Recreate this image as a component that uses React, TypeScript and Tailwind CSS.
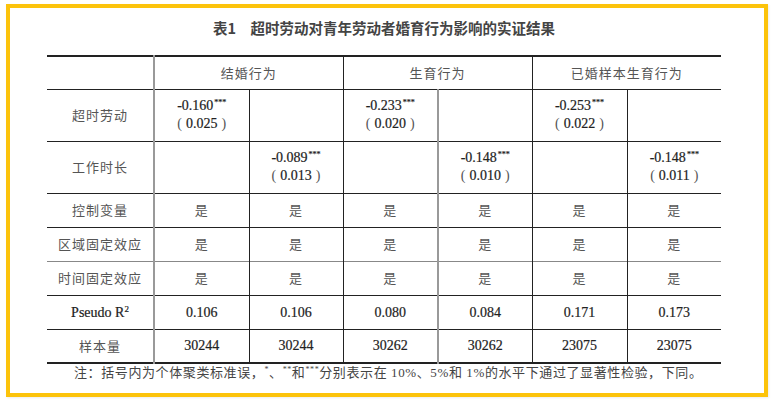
import React from "react";

const serif = { fontFamily: '"Liberation Serif", "Noto Sans CJK SC", serif' };
const cjkFont = { fontFamily: '"Noto Sans CJK SC", sans-serif' };

function Stars({ n }: { n: string }) {
  return <span className="text-[8px] relative -top-[5px] ml-[1px]">{n}</span>;
}

function Coef({ v, se }: { v: string; se: string }) {
  return (
    <div className="flex flex-col items-center leading-[16px] text-[14px] text-[#222] [-webkit-text-stroke:0.2px_#222]">
      <div>
        {v}
        <Stars n="***" />
      </div>
      <div className="flex items-center">
        <span className="text-[14px] text-[#555] mr-[4px] [-webkit-text-stroke:0px]">(</span>
        <span>{se}</span>
        <span className="text-[14px] text-[#555] ml-[4px] [-webkit-text-stroke:0px]">)</span>
      </div>
    </div>
  );
}

const cjk = "text-[13px] tracking-[1px] text-[#555]";
const num = "text-[14px] text-[#222] [-webkit-text-stroke:0.2px_#222]";

export default function App() {
  const lb = "border-l border-[#222]";
  const grayL = "border-l-2 border-[#999]";
  const yes = ["是", "是", "是", "是", "是", "是"];
  const rowYes = (label: string, grayTop?: boolean) => (
    <tr className={`h-[34px] border-t ${grayTop ? "border-[#888]" : "border-[#222]"}`}>
      <td className={cjk} style={cjkFont}>{label}</td>
      {yes.map((y, i) => (
        <td
          key={i}
          style={cjkFont}
          className={`${cjk} ${i === 0 || i === 3 ? grayL : lb}`}
        >
          {y}
        </td>
      ))}
    </tr>
  );
  const nums = (label: React.ReactNode, vals: string[]) => (
    <tr className="h-[34px] border-t border-[#222]">
      <td className={num}>{label}</td>
      {vals.map((v, i) => (
        <td key={i} className={`${num} ${i === 0 || i === 3 ? grayL : lb}`}>
          {v}
        </td>
      ))}
    </tr>
  );
  return (
    <div className="w-[776px] h-[402px] bg-white pt-[4px] pl-[6px]" style={serif}>
      <div className="w-[762px] h-[393px] border-4 border-[#fcc30b] bg-white flex flex-col shadow-[1px_1px_2px_rgba(0,0,0,0.08)]">
        <div
          className="mt-[10px] h-[20px] leading-[20px] text-center text-[14.5px] font-bold text-[#444] pr-[6px]"
          style={cjkFont}
        >
          表1　超时劳动对青年劳动者婚育行为影响的实证结果
        </div>
        <div className="ml-[37px] mt-[17px]">
          <table
            className="table-fixed border-collapse text-center w-[674px] border-t-2 border-b-2 border-[#222]"
            style={serif}
          >
            <colgroup>
              <col className="w-[107px]" />
              <col className="w-[95px]" />
              <col className="w-[94px]" />
              <col className="w-[95px]" />
              <col className="w-[94px]" />
              <col className="w-[95px]" />
              <col className="w-[94px]" />
            </colgroup>
            <tbody>
              <tr className="h-[33px]">
                <td></td>
                <td colSpan={2} style={cjkFont} className={`${cjk} ${grayL}`}>结婚行为</td>
                <td colSpan={2} style={cjkFont} className={`${cjk} ${lb}`}>生育行为</td>
                <td colSpan={2} style={cjkFont} className={`${cjk} ${lb}`}>已婚样本生育行为</td>
              </tr>
              <tr className="h-[52px] border-t border-[#222]">
                <td className={cjk} style={cjkFont}>超时劳动</td>
                <td className={grayL}><Coef v="-0.160" se="0.025" /></td>
                <td className={lb}></td>
                <td className={lb}><Coef v="-0.233" se="0.020" /></td>
                <td className={grayL}></td>
                <td className={lb}><Coef v="-0.253" se="0.022" /></td>
                <td className={lb}></td>
              </tr>
              <tr className="h-[52px] border-t border-[#222]">
                <td className={cjk} style={cjkFont}>工作时长</td>
                <td className={grayL}></td>
                <td className={lb}><Coef v="-0.089" se="0.013" /></td>
                <td className={lb}></td>
                <td className={grayL}><Coef v="-0.148" se="0.010" /></td>
                <td className={lb}></td>
                <td className={lb}><Coef v="-0.148" se="0.011" /></td>
              </tr>
              {rowYes("控制变量")}
              {rowYes("区域固定效应")}
              {rowYes("时间固定效应", true)}
              {nums(
                <span>
                  Pseudo R<span className="text-[9px] relative -top-[5px]">2</span>
                </span>,
                ["0.106", "0.106", "0.080", "0.084", "0.171", "0.173"]
              )}
              <tr className="h-[34px] border-t border-[#222]">
                <td className={cjk} style={cjkFont}>样本量</td>
                {["30244", "30244", "30262", "30262", "23075", "23075"].map((v, i) => (
                  <td key={i} className={`${num} ${i === 0 || i === 3 ? grayL : lb}`}>
                    {v}
                  </td>
                ))}
              </tr>
            </tbody>
          </table>
          <div className="-mt-[1px] ml-[27px] leading-[18px] text-[13px] text-[#444] tracking-[0.6px] whitespace-nowrap">
            <span style={cjkFont}>注：括号内为个体聚类标准误，</span>
            <span className="text-[8px] relative -top-[5px]">*</span>
            <span style={cjkFont}>、</span>
            <span className="text-[8px] relative -top-[5px]">**</span>
            <span style={cjkFont}>和</span>
            <span className="text-[8px] relative -top-[5px]">***</span>
            <span style={cjkFont}>分别表示在</span> 10%<span style={cjkFont}>、</span>5%<span style={cjkFont}>和</span> 1%<span style={cjkFont}>的水平下通过了显著性检验，下同。</span>
          </div>
        </div>
      </div>
    </div>
  );
}
